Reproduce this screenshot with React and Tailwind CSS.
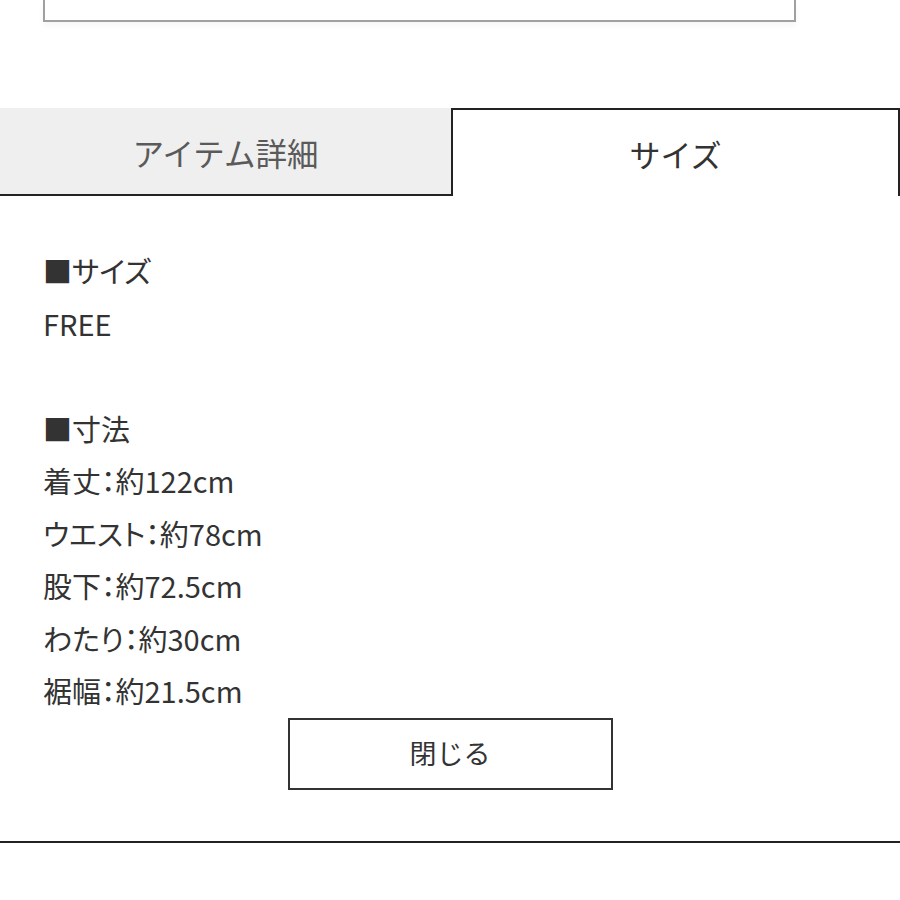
import React from 'react';

export default function App() {
    const rows = [
        "■サイズ",
        "FREE",
        "",
        "■寸法",
        "着丈：約122cm",
        "ウエスト：約78cm",
        "股下：約72.5cm",
        "わたり：約30cm",
        "裾幅：約21.5cm",
    ];

    return (
        <div className="w-[900px] h-[900px] bg-white overflow-hidden" style={{ fontFamily: '"Noto Sans CJK JP", "Noto Sans", sans-serif' }}>
            {/* previous box, cut off at top */}
            <div className="ml-[43px] w-[753px] h-[22px] border-x-2 border-b-2 border-[#a0a0a0] shadow-[0_4px_6px_rgba(0,0,0,0.04)]"></div>

            {/* Tabs */}
            <div className="mt-[86px] flex h-[88px]">
                <div className="w-[451px] bg-[#efefef] border-b-2 border-[#222] flex items-center justify-center pt-[3px] text-[31.5px] text-[#5a5a5a]">
                    アイテム詳細
                </div>
                <div className="flex-1 bg-white border-t-2 border-x-2 border-[#222] flex items-center justify-center pt-[3px] text-[31px] text-[#333]">
                    サイズ
                </div>
            </div>

            {/* Content */}
            <div className="pt-[48px] px-[43px] text-[29px] leading-[52.5px] text-[#333] [font-feature-settings:'palt']">
                {rows.map((r, i) => (
                    <p key={i} className="h-[52.5px] whitespace-nowrap">{r}</p>
                ))}
            </div>

            <div className="mt-[1px] flex justify-center">
                <button className="w-[325px] h-[72px] border-2 border-[#333] bg-white text-[27px] text-[#333]">
                    閉じる
                </button>
            </div>

            <div className="mt-[51px] h-[2px] bg-[#222]"></div>
        </div>
    );
}
